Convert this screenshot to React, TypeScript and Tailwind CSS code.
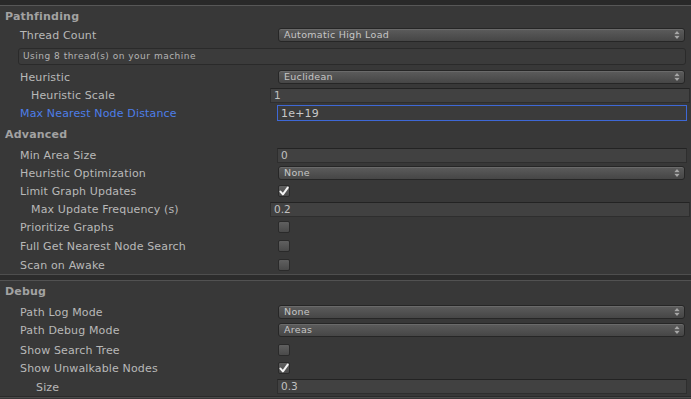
import React from "react";

const font = { fontFamily: '"DejaVu Sans", "Liberation Sans", sans-serif' };

function Arrows() {
  return (
    <svg width="6" height="10" viewBox="0 0 6 10" className="shrink-0">
      <path d="M0.5 4 L3 1 L5.5 4 Z" fill="#a8a8a8" />
      <path d="M0.5 6 L3 9 L5.5 6 Z" fill="#a8a8a8" />
      <rect x="0.5" y="4.6" width="5" height="0.8" fill="#777" />
    </svg>
  );
}

function Dropdown({ value }: { value: string }) {
  return (
    <div className="ml-[278px] mr-[6px] flex h-[14px] flex-1 items-center justify-between rounded-[3px] border border-[#262626] bg-gradient-to-b from-[#5c5c5c] to-[#464646] pl-[5px] pr-[4px] shadow-[inset_0_1px_0_#6a6a6a]">
      <span className="text-[9.5px] leading-none tracking-[0.3px] text-[#c6c6c6]">{value}</span>
      <Arrows />
    </div>
  );
}

function Field({ value, indent, focused }: { value: string; indent?: boolean; focused?: boolean }) {
  const cls = indent ? "ml-[270px] mr-[1px]" : "ml-[277px] mr-[4px]";
  if (focused) {
    return (
      <div className={`${cls} flex h-[16px] flex-1 items-center border border-[#3e68d6] bg-[#3b3b3b] pl-[3px]`}>
        <span className="text-[11px] leading-none tracking-[0.2px] text-[#c8c8c8]">{value}</span>
      </div>
    );
  }
  return (
    <div className={`${cls} flex h-[15px] flex-1 items-center border border-[#2e2e2e] border-t-[#232323] bg-[#414141] pl-[3px]`}>
      <span className="text-[10.5px] leading-none text-[#c2c2c2]">{value}</span>
    </div>
  );
}

function Check({ checked }: { checked?: boolean }) {
  return (
    <div className="ml-[278px] flex h-[12px] w-[12px] items-center justify-center rounded-[2px] border border-[#2a2a2a] bg-gradient-to-b from-[#606060] to-[#4a4a4a]">
      {checked && (
        <svg width="11" height="11" viewBox="0 0 11 11">
          <path d="M1.6 5.6 L4.3 8.6 L9.6 1.2" stroke="#f4f4f4" strokeWidth="2.2" fill="none" strokeLinecap="round" strokeLinejoin="round" />
        </svg>
      )}
    </div>
  );
}

function Row({
  label,
  labelLeft = 20,
  h = 18,
  mt = 0,
  blue,
  children,
}: {
  label: string;
  labelLeft?: number;
  h?: number;
  mt?: number;
  blue?: boolean;
  children?: React.ReactNode;
}) {
  return (
    <div className="relative flex items-center" style={{ height: h, marginTop: mt }}>
      <span
        className={`absolute text-[11px] leading-none tracking-[0.15px] ${blue ? "text-[#4d7ee8]" : "text-[#b8b8b8]"}`}
        style={{ left: labelLeft, top: "50%", transform: "translateY(-50%)" }}
      >
        {label}
      </span>
      {children}
    </div>
  );
}

function Header({ title, h }: { title: string; h: number }) {
  return (
    <div className="flex items-center pl-[5px]" style={{ height: h }}>
      <span className="text-[11px] font-bold leading-none tracking-[0.2px] text-[#a2a2a2]">{title}</span>
    </div>
  );
}

export default function App() {
  return (
    <div className="h-[399px] w-[691px] overflow-hidden bg-[#383838]" style={font}>
      <div className="h-[5px] bg-[#292929]" />
      <div className="h-[1px] bg-[#575757]" />
      <Header title="Pathfinding" h={20} />
      <Row label="Thread Count">
        <Dropdown value="Automatic High Load" />
      </Row>
      <div className="ml-[18px] mr-[5px] mt-[4px] flex h-[17px] items-center rounded-[3px] border border-[#2a2a2a] bg-[#3b3b3b] pl-[4px]">
        <span className="text-[9px] leading-none tracking-[0.5px] text-[#b4b4b4]">Using 8 thread(s) on your machine</span>
      </div>
      <Row label="Heuristic" mt={3}>
        <Dropdown value="Euclidean" />
      </Row>
      <Row label="Heuristic Scale" labelLeft={31}>
        <Field value="1" indent />
      </Row>
      <Row label="Max Nearest Node Distance" blue>
        <Field value="1e+19" focused />
      </Row>
      <Header title="Advanced" h={24} />
      <Row label="Min Area Size">
        <Field value="0" />
      </Row>
      <Row label="Heuristic Optimization">
        <Dropdown value="None" />
      </Row>
      <Row label="Limit Graph Updates">
        <Check checked />
      </Row>
      <Row label="Max Update Frequency (s)" labelLeft={31}>
        <Field value="0.2" indent />
      </Row>
      <Row label="Prioritize Graphs">
        <Check />
      </Row>
      <Row label="Full Get Nearest Node Search" mt={1}>
        <Check />
      </Row>
      <Row label="Scan on Awake" h={19}>
        <Check />
      </Row>
      <div className="h-[1px] bg-[#4e4e4e]" />
      <div className="h-[5px] bg-[#2c2c2c]" />
      <div className="h-[1px] bg-[#525252]" />
      <Header title="Debug" h={21} />
      <Row label="Path Log Mode" mt={1}>
        <Dropdown value="None" />
      </Row>
      <Row label="Path Debug Mode">
        <Dropdown value="Areas" />
      </Row>
      <Row label="Show Search Tree" mt={2}>
        <Check />
      </Row>
      <Row label="Show Unwalkable Nodes">
        <Check checked />
      </Row>
      <Row label="Size" labelLeft={36} h={19}>
        <Field value="0.3" />
      </Row>
      <div className="h-[1px] bg-[#2a2a2a]" />
      <div className="h-[1px] bg-[#4a4a4a]" />
    </div>
  );
}
